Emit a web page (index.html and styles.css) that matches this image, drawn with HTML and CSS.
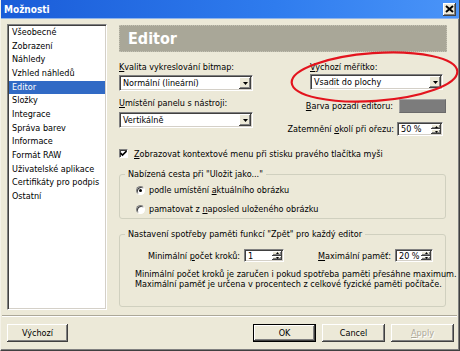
FILE: index.html
```html
<!DOCTYPE html>
<html lang="cs">
<head>
    <meta charset="UTF-8">
    <meta name="viewport" content="width=device-width, initial-scale=1.0">
    <title>Možnosti</title>
    <link rel="stylesheet" href="styles.css">
</head>
<body>
<div class="window">
    <div class="titlebar">
        <span class="title">Možnosti</span>
        <span class="close">
            <svg width="9" height="8" viewBox="0 0 9 8"><path d="M1 1L8 7M8 1L1 7" stroke="#000" stroke-width="2"/></svg>
        </span>
    </div>

    <div class="content">
        <ul class="nav">
            <li>Všeobecné</li>
            <li>Zobrazení</li>
            <li>Náhledy</li>
            <li>Vzhled náhledů</li>
            <li class="selected">Editor</li>
            <li>Složky</li>
            <li>Integrace</li>
            <li>Správa barev</li>
            <li>Informace</li>
            <li>Formát RAW</li>
            <li>Uživatelské aplikace</li>
            <li>Certifikáty pro podpis</li>
            <li>Ostatní</li>
        </ul>

        <div class="panel">
            <div class="header">Editor</div>

            <div class="settings">
                <div class="col-left">
                    <div class="label"><u>K</u>valita vykreslování bitmap:</div>
                    <div class="select">
                        <span class="value">Normální (lineární)</span>
                        <span class="drop"><svg width="5" height="3" viewBox="0 0 5 3"><path d="M0 0H5L2.5 3Z" fill="#000"/></svg></span>
                    </div>
                    <div class="label label-second"><u>U</u>místění panelu s nástroji:</div>
                    <div class="select select-second">
                        <span class="value">Vertikálně</span>
                        <span class="drop"><svg width="5" height="3" viewBox="0 0 5 3"><path d="M0 0H5L2.5 3Z" fill="#000"/></svg></span>
                    </div>
                </div>

                <div class="col-right">
                    <div class="zoom-box">
                        <div class="label"><u>V</u>ýchozí měřítko:</div>
                        <div class="select">
                            <span class="value">Vsadit do plochy</span>
                            <span class="drop"><svg width="5" height="3" viewBox="0 0 5 3"><path d="M0 0H5L2.5 3Z" fill="#000"/></svg></span>
                        </div>
                    </div>
                    <div class="field-row color-row">
                        <span><u>B</u>arva pozadí editoru:</span>
                        <span class="swatch"></span>
                    </div>
                    <div class="field-row dim-row">
                        <span>Zatemnění <u>o</u>kolí při ořezu:</span>
                        <div class="spin spin-wide">
                            <span class="num">50 %</span>
                            <span class="arrows">
                                <span class="arrow"><svg width="3" height="2" viewBox="0 0 3 2"><path d="M0 2H3L1.5 0Z" fill="#000"/></svg></span>
                                <span class="arrow"><svg width="3" height="2" viewBox="0 0 3 2"><path d="M0 0H3L1.5 2Z" fill="#000"/></svg></span>
                            </span>
                        </div>
                    </div>
                </div>
            </div>

            <div class="check-row">
                <span class="checkbox"><svg width="7" height="7" viewBox="0 0 7 7"><path d="M0.5 3L2.5 5L6.5 1" stroke="#000" stroke-width="1.6" fill="none"/></svg></span>
                <span><u>Z</u>obrazovat kontextové menu při stisku pravého tlačítka myši</span>
            </div>

            <fieldset class="group group-path">
                <legend>Nabízená cesta při "Uložit jako..."</legend>
                <div class="radio-row">
                    <span class="radio checked"></span>
                    <span>podle umístění <u>a</u>ktuálního obrázku</span>
                </div>
                <div class="radio-row">
                    <span class="radio"></span>
                    <span>pamatovat z <u>n</u>aposled uloženého obrázku</span>
                </div>
            </fieldset>

            <fieldset class="group group-undo">
                <legend>Nastavení spotřeby paměti funkcí "Zpět" pro každý editor</legend>
                <div class="undo-row">
                    <span>Minimální <u>p</u>očet kroků:</span>
                    <div class="spin spin-steps">
                        <span class="num">1</span>
                        <span class="arrows">
                            <span class="arrow"><svg width="3" height="2" viewBox="0 0 3 2"><path d="M0 2H3L1.5 0Z" fill="#000"/></svg></span>
                            <span class="arrow"><svg width="3" height="2" viewBox="0 0 3 2"><path d="M0 0H3L1.5 2Z" fill="#000"/></svg></span>
                        </span>
                    </div>
                    <span class="undo-max"><u>M</u>aximální paměť:</span>
                    <div class="spin spin-mem">
                        <span class="num">20 %</span>
                        <span class="arrows">
                            <span class="arrow"><svg width="3" height="2" viewBox="0 0 3 2"><path d="M0 2H3L1.5 0Z" fill="#000"/></svg></span>
                            <span class="arrow"><svg width="3" height="2" viewBox="0 0 3 2"><path d="M0 0H3L1.5 2Z" fill="#000"/></svg></span>
                        </span>
                    </div>
                </div>
                <p class="note">Minimální počet kroků je zaručen i pokud spotřeba paměti přesáhne maximum.<br>Maximální paměť je určena v procentech z celkové fyzické paměti počítače.</p>
            </fieldset>
        </div>
    </div>

    <div class="separator"></div>

    <div class="actions">
        <button class="btn">Výchozí</button>
        <div class="actions-right">
            <button class="btn default">OK</button>
            <button class="btn">Cancel</button>
            <button class="btn" disabled><u>A</u>pply</button>
        </div>
    </div>

    <!-- red marker drawn over the "Výchozí měřítko" field -->
    <svg class="marker" width="460" height="351" viewBox="0 0 460 351">
        <ellipse cx="374.5" cy="77" rx="83" ry="24" transform="rotate(-4 374.5 77)" fill="none" stroke="#e3141e" stroke-width="2.2"/>
    </svg>
</div>
</body>
</html>
```

FILE: styles.css
```css
* {
    box-sizing: border-box;
}
body {
    margin: 0;
    font-family: "DejaVu Sans Condensed", Tahoma, "Liberation Sans", sans-serif;
    font-size: 9px;
    color: #000;
}
u {
    text-decoration: underline;
    text-underline-offset: 1px;
}
.window {
    position: relative;
    width: 460px;
    height: 351px;
    background: #ece9d8;
    border-left: 1px solid #f4f2e8;
    border-right: 1px solid #404040;
    border-bottom: 1px solid #404040;
    box-shadow: inset -1px -1px #808080;
    overflow: hidden;
}
.titlebar {
    height: 19px;
    display: flex;
    align-items: center;
    justify-content: space-between;
    padding: 0 3px 0 3px;
    background: linear-gradient(to right, #1a5cd8, #2f7cee 60%, #4a94f8);
    border-bottom: 1px solid #8fb4ec;
}
.title {
    color: #fff;
    font-weight: bold;
    font-size: 10px;
}
.close {
    width: 13px;
    height: 13px;
    display: flex;
    align-items: center;
    justify-content: center;
    background: #ece9d8;
    box-shadow: inset -1px -1px #404040, inset 1px 1px #fff, inset -2px -2px #808080;
}
.content {
    display: flex;
    gap: 12px;
    padding: 5px 0 0 6px;
}
.nav {
    list-style: none;
    margin: 0;
    width: 100px;
    height: 286px;
    background: #fff;
    border: 1px solid;
    border-color: #808080 #fff #fff #808080;
    box-shadow: inset 1px 1px #404040, inset -1px -1px #d4d0c8;
    padding: 1px;
}
.nav li {
    line-height: 13.67px;
    padding-left: 3px;
    white-space: nowrap;
}
.nav li.selected {
    background: #316ac5;
    color: #fff;
}
.panel {
    width: 328px;
    padding-top: 1px;
}
.header {
    height: 27px;
    background: #a9a798;
    border: 1px dotted #c4c2b4;
    color: #fff;
    font-size: 16px;
    font-weight: bold;
    line-height: 25px;
    padding-left: 8px;
}
.settings {
    display: grid;
    grid-template-columns: 134px 1fr;
    column-gap: 20px;
    margin-top: 10px;
}
.label {
    line-height: 11px;
    white-space: nowrap;
}
.select {
    display: flex;
    align-items: center;
    height: 16px;
    margin-top: 2px;
    padding: 1px;
    background: #fff;
    border: 1px solid;
    border-color: #808080 #fff #fff #808080;
    box-shadow: inset 1px 1px #404040, inset -1px -1px #d4d0c8;
}
.select .value {
    flex: 1;
    padding-left: 2px;
    line-height: 12px;
    white-space: nowrap;
}
.drop,
.arrow {
    display: flex;
    align-items: center;
    justify-content: center;
    background: #ece9d8;
    box-shadow: inset -1px -1px #404040, inset 1px 1px #fff, inset -2px -2px #808080;
}
.drop {
    width: 12px;
    height: 12px;
}
.label-second {
    margin-top: 7px;
}
.select-second {
    margin-top: 3px;
}
.col-right {
    display: flex;
    flex-direction: column;
    align-items: flex-end;
}
.zoom-box {
    width: 133px;
    margin-right: 4px;
}
.zoom-box .select {
    margin-top: 1px;
}
.field-row {
    display: flex;
    align-items: center;
    white-space: nowrap;
}
.color-row {
    gap: 6px;
    margin-top: 9px;
    margin-right: 1px;
}
.swatch {
    width: 47px;
    height: 14px;
    background: #7c7c7c;
    border: 1px solid;
    border-color: #a4a4a4 #6a6a6a #6a6a6a #a4a4a4;
}
.dim-row {
    gap: 3px;
    margin-top: 9px;
    margin-right: 4px;
}
.spin {
    display: flex;
    height: 14px;
    padding: 1px;
    background: #fff;
    border: 1px solid;
    border-color: #808080 #fff #fff #808080;
    box-shadow: inset 1px 1px #404040, inset -1px -1px #d4d0c8;
}
.spin .num {
    flex: 1;
    padding-left: 2px;
    line-height: 10px;
}
.arrows {
    display: flex;
    flex-direction: column;
    width: 10px;
}
.arrow {
    flex: 1;
}
.spin-wide {
    width: 46px;
}
.check-row {
    display: flex;
    align-items: center;
    gap: 6px;
    height: 11px;
    margin-top: 12px;
    white-space: nowrap;
}
.checkbox {
    width: 9px;
    height: 9px;
    display: flex;
    align-items: center;
    justify-content: center;
    background: #fff;
    border: 1px solid;
    border-color: #808080 #fff #fff #808080;
    box-shadow: inset 1px 1px #404040;
}
.group {
    margin: 9px 1px 0 0;
    padding: 0 0 0 5px;
    border: 1px solid #d0d0bf;
    border-radius: 3px;
    min-width: 0;
}
.group legend {
    padding: 0 3px;
    line-height: 12px;
    white-space: nowrap;
}
.group-path {
    padding-top: 4px;
    padding-bottom: 3px;
}
.radio-row {
    display: flex;
    align-items: center;
    gap: 4px;
    height: 12px;
    margin-left: 11px;
    white-space: nowrap;
}
.radio-row + .radio-row {
    margin-top: 7px;
}
.radio {
    position: relative;
    width: 9px;
    height: 9px;
    border-radius: 50%;
    background: #fff;
    border: 1px solid;
    border-color: #808080 #fff #fff #808080;
    box-shadow: inset 1px 1px #404040;
}
.radio.checked::after {
    content: "";
    position: absolute;
    left: 2px;
    top: 2px;
    width: 3px;
    height: 3px;
    border-radius: 50%;
    background: #000;
}
.group-undo {
    padding-top: 9px;
    padding-bottom: 17px;
}
.undo-row {
    display: flex;
    align-items: center;
    gap: 4px;
    height: 13px;
    margin-left: 23px;
    margin-right: 12px;
    white-space: nowrap;
}
.spin-steps {
    width: 40px;
    height: 13px;
}
.undo-max {
    margin-left: auto;
}
.spin-mem {
    width: 38px;
    height: 13px;
}
.note {
    margin: 7px 0 0 10px;
    line-height: 10px;
    white-space: nowrap;
}
.separator {
    height: 2px;
    margin: 5px 2px 0 1px;
    border-top: 1px solid #aca899;
    border-bottom: 1px solid #fff;
}
.actions {
    display: flex;
    justify-content: space-between;
    margin-top: 7px;
    padding: 0 5px 0 6px;
}
.actions-right {
    display: flex;
    gap: 6px;
}
.btn {
    width: 63px;
    height: 18px;
    padding: 0;
    font-family: inherit;
    font-size: 9px;
    color: #000;
    background: #ece9d8;
    border: none;
    box-shadow: inset -1px -1px #404040, inset 1px 1px #fff, inset -2px -2px #808080;
}
.actions > .btn {
    width: 61px;
}
.btn.default {
    border: 1px solid #000;
}
.btn:disabled {
    color: #aca899;
    text-shadow: 1px 1px #fff;
}
.marker {
    position: absolute;
    left: -1px;
    top: 0;
    pointer-events: none;
}
```
